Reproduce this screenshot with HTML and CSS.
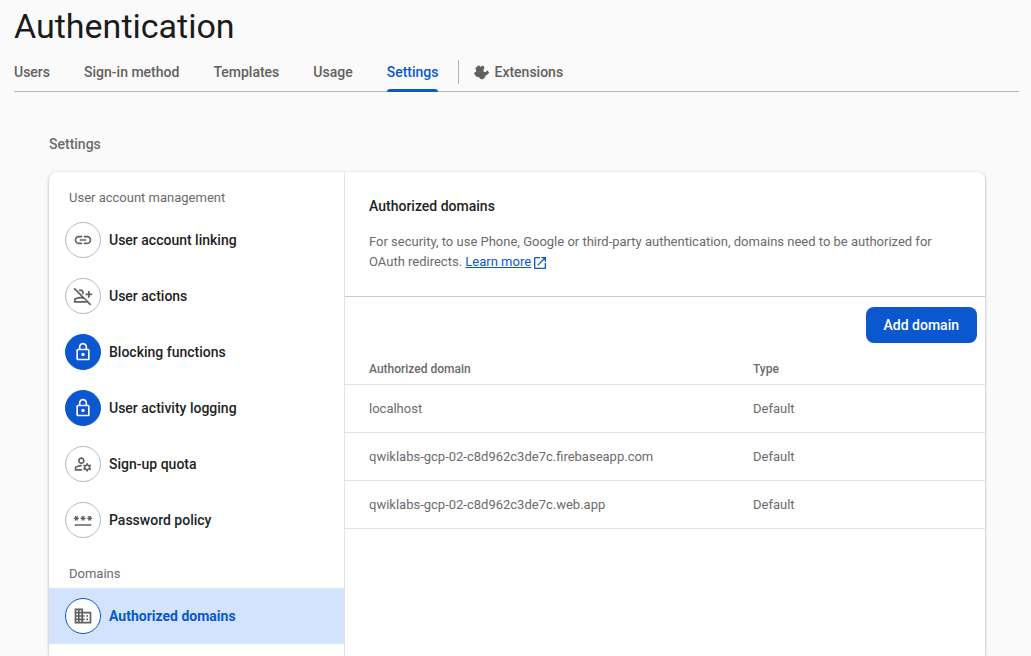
FILE: index.html
```html
<!DOCTYPE html>
<html lang="en">
<head>
  <meta charset="UTF-8">
  <meta name="viewport" content="width=device-width, initial-scale=1.0">
  <title>Authentication</title>
  <link rel="stylesheet" href="styles.css">
</head>
<body>
  <header class="page-header">
    <h1>Authentication</h1>
    <nav class="tabs">
      <a href="#users">Users</a>
      <a href="#sign-in">Sign-in method</a>
      <a href="#templates">Templates</a>
      <a href="#usage">Usage</a>
      <a href="#settings" class="active">Settings</a>
      <a href="#extensions" class="extensions">
        <svg class="ext-icon" viewBox="0 0 16 16" aria-hidden="true"><path d="M1.300 3.800 3 3.100c.1-1.800 2.200-2.300 3.100-.9l.5.700 1.300-.9c1.400-.8 2.900.4 2.300 1.900L9.500 6c-.4 1.200.5 2.200 1.600 2.100 1 0 1.300-.9 1.900-1.800l2.200 2.200-2.200 2.400-1.700.5.1 1.600-2 1.700c-1 .8-2.300.7-3.200 0l-1.100-1.400-2.500-.6-2-2.200c-.6-.8-.5-1.700.3-2.200l1.400-.8z"/></svg>
        Extensions
      </a>
    </nav>
  </header>

  <main class="content">
    <h2 class="section-title">Settings</h2>
    <div class="card">
      <nav class="sidebar">
        <h3>User account management</h3>
        <a href="#linking" class="item">
          <span class="circle"><svg viewBox="0 0 24 24" aria-hidden="true"><path d="M3.900 12c0-1.710 1.390-3.100 3.100-3.100h4V7H7c-2.760 0-5 2.240-5 5s2.240 5 5 5h4v-1.900H7c-1.710 0-3.100-1.390-3.100-3.100zM8 13h8v-2H8v2zm9-6h-4v1.900h4c1.710 0 3.100 1.390 3.100 3.100s-1.390 3.100-3.100 3.100h-4V17h4c2.760 0 5-2.240 5-5s-2.240-5-5-5z"/></svg></span>
          User account linking
        </a>
        <a href="#actions" class="item">
          <span class="circle"><svg viewBox="0 0 24 24" aria-hidden="true"><path d="M20 9V6h-2v3h-3v2h3v3h2v-3h3V9zM9 6c1.100 0 2 .9 2 2 0 .4-.1.7-.3 1l1.500 1.500C12.700 9.800 13 8.900 13 8c0-2.210-1.790-4-4-4-.9 0-1.800.3-2.500.8L8 6.300c.3-.2.6-.3 1-.3zM2.100 2.100.7 3.500l9.700 9.700C10 13.100 9.500 13 9 13c-2.700 0-8 1.300-8 4v3h16v-.2l3.500 3.500 1.400-1.400zM3 18v-1c.2-.7 3.300-2 6-2s5.800 1.300 6 2v1z"/></svg></span>
          User actions
        </a>
        <a href="#blocking" class="item locked">
          <span class="circle"><svg viewBox="0 0 24 24" aria-hidden="true"><path d="M18 8h-1V6c0-2.760-2.240-5-5-5S7 3.240 7 6v2H6c-1.100 0-2 .9-2 2v10c0 1.100.9 2 2 2h12c1.100 0 2-.9 2-2V10c0-1.100-.9-2-2-2zM9 6c0-1.660 1.340-3 3-3s3 1.340 3 3v2H9V6zm9 14H6V10h12v10zm-6-3c1.100 0 2-.9 2-2s-.9-2-2-2-2 .9-2 2 .9 2 2 2z"/></svg></span>
          Blocking functions
        </a>
        <a href="#logging" class="item locked">
          <span class="circle"><svg viewBox="0 0 24 24" aria-hidden="true"><path d="M18 8h-1V6c0-2.760-2.240-5-5-5S7 3.240 7 6v2H6c-1.100 0-2 .9-2 2v10c0 1.100.9 2 2 2h12c1.100 0 2-.9 2-2V10c0-1.100-.9-2-2-2zM9 6c0-1.660 1.340-3 3-3s3 1.340 3 3v2H9V6zm9 14H6V10h12v10zm-6-3c1.100 0 2-.9 2-2s-.9-2-2-2-2 .9-2 2 .9 2 2 2z"/></svg></span>
          User activity logging
        </a>
        <a href="#quota" class="item">
          <span class="circle"><svg viewBox="0 0 24 24" aria-hidden="true"><path d="M4 18v-.650c0-.340.160-.660.410-.810C6.100 15.530 8.030 15 10 15c.030 0 .050 0 .080.010.100-.700.300-1.370.590-1.980-.220-.020-.440-.030-.670-.030-2.420 0-4.680.670-6.610 1.820-.880.520-1.390 1.500-1.390 2.530V20h9.260c-.420-.600-.750-1.280-.970-2H4zM10 12c2.210 0 4-1.790 4-4s-1.790-4-4-4-4 1.790-4 4 1.790 4 4 4zm0-6c1.100 0 2 .9 2 2s-.9 2-2 2-2-.9-2-2 .9-2 2-2zM20.750 16c0-.220-.030-.420-.060-.630l1.140-1.010-1-1.730-1.450.490c-.320-.270-.680-.480-1.080-.630L18 11h-2l-.300 1.490c-.400.150-.760.360-1.080.630l-1.450-.490-1 1.730 1.140 1.010c-.030.210-.060.410-.060.630s.030.420.060.630l-1.140 1.010 1 1.730 1.450-.490c.320.270.680.480 1.080.630L16 21h2l.300-1.490c.400-.150.760-.360 1.080-.630l1.450.490 1-1.730-1.140-1.010c.030-.210.060-.410.060-.630zM17 18c-1.100 0-2-.9-2-2s.9-2 2-2 2 .9 2 2-.9 2-2 2z"/></svg></span>
          Sign-up quota
        </a>
        <a href="#password" class="item">
          <span class="circle"><svg viewBox="0 0 24 24" aria-hidden="true"><path d="M2 17h20v2H2v-2zm1.150-4.050L4 11.470l.850 1.480 1.300-.750-.850-1.480H7v-1.500H5.300l.850-1.470L4.850 7 4 8.470 3.150 7l-1.300.750.850 1.470H1v1.500h1.700l-.850 1.480 1.300.750zm6.700-.750 1.300.750.850-1.480.850 1.480 1.300-.750-.850-1.480H15v-1.500h-1.700l.850-1.470-1.300-.750L12 8.470 11.150 7l-1.300.750.850 1.470H9v1.500h1.700l-.850 1.480zM23 9.220h-1.700l.850-1.470-1.300-.750L20 8.470 19.150 7l-1.300.750.850 1.470H17v1.500h1.700l-.850 1.480 1.300.750.850-1.480.850 1.480 1.300-.750-.850-1.480H23v-1.500z"/></svg></span>
          Password policy
        </a>
        <h3>Domains</h3>
        <a href="#domains" class="item selected">
          <span class="circle"><svg viewBox="0 0 24 24" aria-hidden="true"><path d="M12 7V3H2v18h20V7H12zM6 19H4v-2h2v2zm0-4H4v-2h2v2zm0-4H4V9h2v2zm0-4H4V5h2v2zm4 12H8v-2h2v2zm0-4H8v-2h2v2zm0-4H8V9h2v2zm0-4H8V5h2v2zm10 12h-8v-2h2v-2h-2v-2h2v-2h-2V9h8v10zm-2-8h-2v2h2v-2zm0 4h-2v2h2v-2z"/></svg></span>
          Authorized domains
        </a>
      </nav>

      <section class="panel">
        <div class="intro">
          <h2>Authorized domains</h2>
          <p>For security, to use Phone, Google or third-party authentication, domains need to be authorized for OAuth redirects. <a href="#learn-more">Learn more</a><svg class="open-icon" viewBox="0 0 24 24" aria-hidden="true"><path d="M19 19H5V5h7V3H5c-1.110 0-2 .9-2 2v14c0 1.100.890 2 2 2h14c1.100 0 2-.9 2-2v-7h-2v7zM14 3v2h3.590l-9.830 9.830 1.410 1.410L19 6.410V10h2V3h-7z"/></svg></p>
        </div>
        <div class="actions">
          <button type="button">Add domain</button>
        </div>
        <table>
          <thead>
            <tr><th scope="col">Authorized domain</th><th scope="col">Type</th></tr>
          </thead>
          <tbody>
            <tr><td>localhost</td><td>Default</td></tr>
            <tr><td>qwiklabs-gcp-02-c8d962c3de7c.firebaseapp.com</td><td>Default</td></tr>
            <tr><td>qwiklabs-gcp-02-c8d962c3de7c.web.app</td><td>Default</td></tr>
          </tbody>
        </table>
      </section>
    </div>
  </main>
</body>
</html>
```
FILE: styles.css
```css
* {
  box-sizing: border-box;
}
html,
body {
  height: 100%;
}
body {
  margin: 0;
  display: flex;
  flex-direction: column;
  font-family: Roboto, Arial, sans-serif;
  font-size: 13px;
  line-height: 20px;
  color: #6b6b6b;
  background-color: #fafafa;
}
h1,
h2,
h3,
p {
  margin: 0;
}
svg {
  fill: currentColor;
}

/* Header and tabs */
.page-header {
  padding: 4px 12px 0 14px;
}
h1 {
  font-size: 34px;
  font-weight: 400;
  line-height: 44px;
  color: #1b1b1b;
}
.tabs {
  display: flex;
  gap: 34px;
  border-bottom: 1px solid #b0b6c3;
}
.tabs a {
  height: 43px;
  padding-top: 14px;
  font-size: 14px;
  font-weight: 500;
  color: #616161;
  text-decoration: none;
}
.tabs .active {
  position: relative;
  color: #0b57d0;
}
.tabs .active::after {
  content: "";
  position: absolute;
  left: 0;
  right: 0;
  bottom: -1px;
  height: 3px;
  border-radius: 3px 3px 0 0;
  background-color: #0b57d0;
}
.tabs .extensions {
  display: flex;
  gap: 4px;
  height: 24px;
  margin: 12px 0 0 -14px;
  padding: 2px 0 0 15px;
  border-left: 1px solid #b0b6c3;
}
.ext-icon {
  width: 16px;
  height: 16px;
  margin-top: 2px;
}

/* Settings card */
.content {
  flex: 1;
  display: flex;
  flex-direction: column;
  padding: 42px 46px 0 49px;
}
.section-title {
  margin-bottom: 18px;
  font-size: 14px;
  font-weight: 500;
}
.card {
  flex: 1;
  display: flex;
  background-color: #fff;
  border-radius: 8px 8px 0 0;
  box-shadow: 0 1px 3px rgba(0, 0, 0, 0.35);
}
.sidebar {
  width: 296px;
  padding-top: 16px;
  border-right: 1px solid #e1e4ed;
}
.sidebar h3 {
  margin-left: 20px;
  padding-bottom: 4px;
  font-size: 13px;
  font-weight: 400;
}
.item + h3 {
  padding-top: 16px;
}
.item {
  display: flex;
  align-items: center;
  gap: 8px;
  height: 56px;
  padding-left: 16px;
  font-size: 14px;
  font-weight: 500;
  color: #1f1f1f;
  text-decoration: none;
}
.circle {
  display: flex;
  align-items: center;
  justify-content: center;
  width: 36px;
  height: 36px;
  border: 1px solid #b4bacb;
  border-radius: 50%;
  background-color: #fff;
  color: #616161;
}
.circle svg {
  width: 20px;
  height: 20px;
}
.locked .circle {
  border-color: #0b57d0;
  background-color: #0b57d0;
  color: #fff;
}
.selected {
  background-color: #d3e3fd;
  font-weight: 700;
  color: #0b57d0;
}
.selected .circle {
  border-color: #0b57d0;
}

/* Domains panel */
.panel {
  flex: 1;
}
.intro {
  padding: 24px;
  border-bottom: 1px solid #c7cad5;
}
.intro h2 {
  margin-bottom: 16px;
  font-size: 14px;
  font-weight: 500;
  color: #1f1f1f;
}
.intro a,
.open-icon {
  color: #0b57d0;
}
.open-icon {
  width: 16px;
  height: 16px;
  margin-left: 1px;
  vertical-align: middle;
}
.actions {
  display: flex;
  justify-content: flex-end;
  padding: 10px 8px;
}
button {
  height: 36px;
  padding: 0 18px;
  border: none;
  border-radius: 8px;
  background-color: #0b57d0;
  font-family: inherit;
  font-size: 14px;
  font-weight: 500;
  color: #fff;
}
table {
  width: 100%;
  table-layout: fixed;
  border-collapse: collapse;
}
th,
td {
  height: 48px;
  padding: 2px 0 0 24px;
  border-bottom: 1px solid #e1e4ed;
  text-align: left;
}
th:first-child {
  width: 60%;
}
th {
  height: 31px;
  font-size: 12px;
  font-weight: 500;
}
```
